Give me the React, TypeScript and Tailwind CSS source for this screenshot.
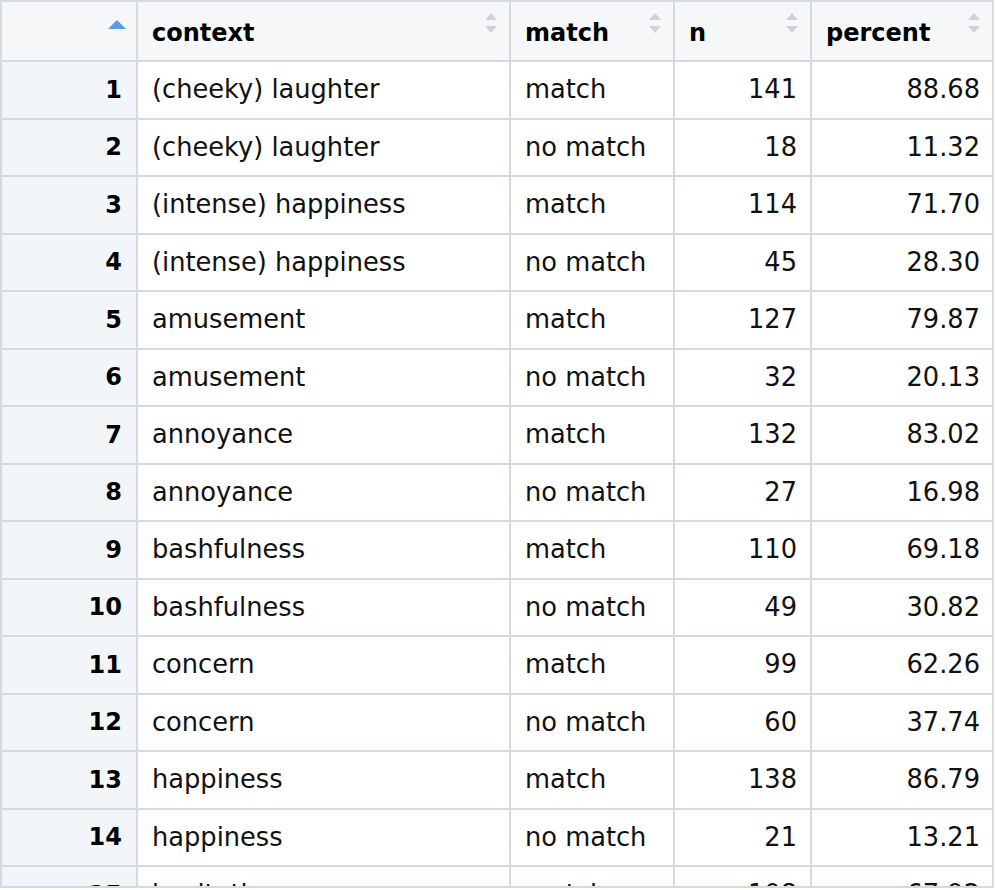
import React from "react";

interface Row {
  context: string;
  match: string;
  n: number;
  percent: string;
}

const rows: Row[] = [
  { context: "(cheeky) laughter", match: "match", n: 141, percent: "88.68" },
  { context: "(cheeky) laughter", match: "no match", n: 18, percent: "11.32" },
  { context: "(intense) happiness", match: "match", n: 114, percent: "71.70" },
  { context: "(intense) happiness", match: "no match", n: 45, percent: "28.30" },
  { context: "amusement", match: "match", n: 127, percent: "79.87" },
  { context: "amusement", match: "no match", n: 32, percent: "20.13" },
  { context: "annoyance", match: "match", n: 132, percent: "83.02" },
  { context: "annoyance", match: "no match", n: 27, percent: "16.98" },
  { context: "bashfulness", match: "match", n: 110, percent: "69.18" },
  { context: "bashfulness", match: "no match", n: 49, percent: "30.82" },
  { context: "concern", match: "match", n: 99, percent: "62.26" },
  { context: "concern", match: "no match", n: 60, percent: "37.74" },
  { context: "happiness", match: "match", n: 138, percent: "86.79" },
  { context: "happiness", match: "no match", n: 21, percent: "13.21" },
  { context: "hesitation", match: "match", n: 108, percent: "67.92" },
];

const SortIcon = () => (
  <svg
    width="14"
    height="22"
    viewBox="0 0 14 22"
    className="absolute right-[11px] top-[10px]"
  >
    <path d="M1 8 L7 1 L13 8 Z" fill="#cfd2d6" />
    <path d="M1 14 L7 21 L13 14 Z" fill="#cfd2d6" />
  </svg>
);

const SortAscIcon = () => (
  <svg
    width="18"
    height="9"
    viewBox="0 0 18 9"
    className="absolute right-[10px] top-[18px]"
  >
    <path d="M0 9 L9 0 L18 9 Z" fill="#5a9bef" />
  </svg>
);

const cellBase = "flex items-center border-[#d6d9dd]";

const App: React.FC = () => {
  return (
    <div
      className="w-[994px] h-[888px] border-2 border-[#d6d9dd] overflow-hidden bg-white text-[#111]"
      style={{ fontFamily: '"DejaVu Sans", Verdana, sans-serif' }}
    >
      {/* header */}
      <div className="flex h-[60px] border-b-2 border-[#d6d9dd] bg-[#f6f7f9] text-[24px] font-bold text-black">
        <div className={`${cellBase} relative w-[136px] shrink-0 border-r-2 bg-[#f6f7f9]`}>
          <SortAscIcon />
        </div>
        <div className={`${cellBase} relative w-[373px] shrink-0 border-r-2 pl-[14px] pt-1`}>
          context
          <SortIcon />
        </div>
        <div className={`${cellBase} relative w-[164px] shrink-0 border-r-2 pl-[14px] pt-1`}>
          match
          <SortIcon />
        </div>
        <div className={`${cellBase} relative w-[137px] shrink-0 border-r-2 pl-[14px] pt-1`}>
          n
          <SortIcon />
        </div>
        <div className={`${cellBase} relative flex-1 pl-[14px] pt-1`}>
          percent
          <SortIcon />
        </div>
      </div>

      {rows.map((row, i) => (
        <div
          key={i}
          className="flex h-[57.5px] border-b-2 border-[#d6d9dd] text-[25.7px]"
        >
          <div
            className={`${cellBase} w-[136px] shrink-0 justify-end border-r-2 bg-[#f3f6f8] pr-[14px] text-[24px] font-bold text-black`}
          >
            {i + 1}
          </div>
          <div className={`${cellBase} w-[373px] shrink-0 border-r-2 pl-[14px] whitespace-nowrap`}>
            {row.context}
          </div>
          <div className={`${cellBase} w-[164px] shrink-0 border-r-2 pl-[14px] whitespace-nowrap`}>
            {row.match}
          </div>
          <div className={`${cellBase} w-[137px] shrink-0 justify-end border-r-2 pr-[13px]`}>
            {row.n}
          </div>
          <div className={`${cellBase} flex-1 justify-end pr-[12px]`}>
            {row.percent}
          </div>
        </div>
      ))}
    </div>
  );
};

export default App;
